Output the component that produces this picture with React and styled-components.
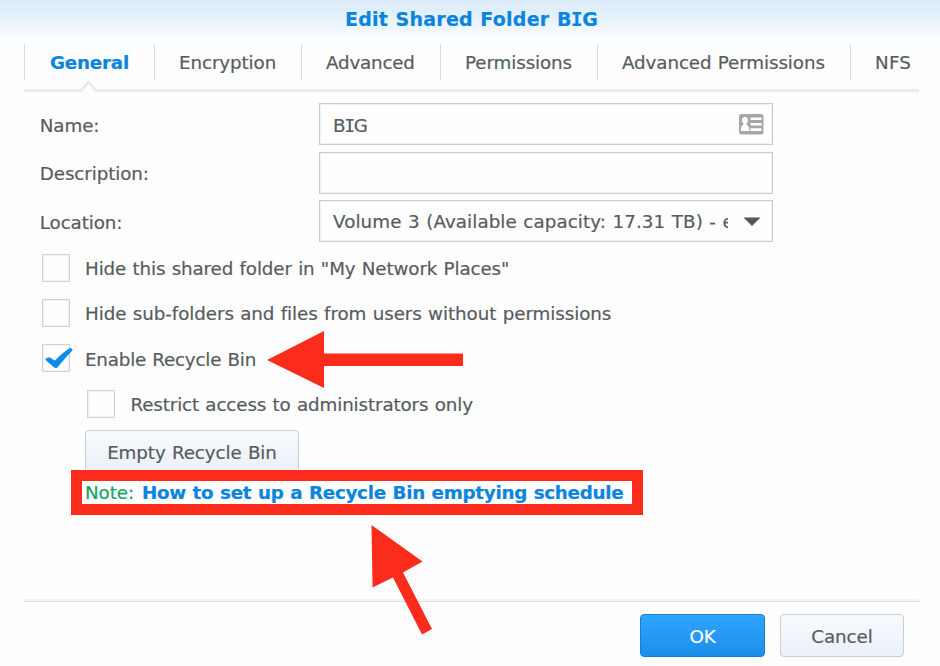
import React from "react";
import styled, { createGlobalStyle, css } from "styled-components";

const Global = createGlobalStyle`
  * { box-sizing: border-box; }
  body { margin: 0; background: #fff; overflow: hidden; }
`;

const Dialog = styled.main`
  position: relative;
  width: 940px;
  height: 666px;
  overflow: hidden;
  display: flex;
  flex-direction: column;
  background: linear-gradient(#dcebf8 0, #e2f0fa 14px, #eff7fd 27px, #fcfeff 41px, #fefefe 52px);
  color: #575c61;
  font: 18.3px/24px "DejaVu Sans", Verdana, sans-serif;
  white-space: nowrap;
`;

const Text = styled.span`
  letter-spacing: ${(p) => p.$track ?? -0.1}px;
  word-spacing: 0.6px;
  -webkit-text-stroke: 0.2px currentColor;
`;

const Title = styled.h1`
  margin: 0;
  height: 44px;
  padding: 7px 0 0 3px;
  text-align: center;
  font-size: 19px;
  line-height: 24px;
  color: #0a85df;
`;

const SerifI = styled.span`
  font-family: "DejaVu Sans Mono", monospace;
  margin: 0 ${(p) => (p.$bold ? "-0.03em" : "-0.07em")};
`;

const Tabs = styled.nav`
  height: 48px;
  margin: 0 21px 0 24px;
  display: flex;
  align-items: flex-start;
  position: relative;
`;

const Tab = styled.div`
  flex: 0 0 ${(p) => p.$w}px;
  height: 36px;
  padding: 7px 0 0 ${(p) => (p.$active ? 25 : 24)}px;
  border-left: 1px solid #d6d9dc;
  ${(p) =>
    p.$active &&
    css`
      color: #0a85df;
      font-weight: bold;
    `}
`;

const TabLine = styled.svg`
  position: absolute;
  left: 0;
  top: 34px;
`;

const Form = styled.section`
  padding: 11px 0 0 39px;
  display: flex;
  flex-direction: column;
`;

const Field = styled.div`
  display: grid;
  grid-template-columns: 280px 454px;
  align-items: center;
  height: 42px;
  margin-bottom: 6.5px;
`;

const Label = styled.label`
  padding: 3px 0 0 0.8px;
`;

const Box = styled.div`
  height: 42px;
  padding: 4px 8px 0 13px;
  border: 1px solid #c9cdd1;
  box-shadow: inset 0 0 0 1px #eff1f3;
  display: flex;
  align-items: center;
  justify-content: space-between;
  svg { flex: none; margin-top: -2px; }
`;

const SelectValue = styled.div`
  width: 395px;
  overflow: hidden;
  margin-top: -2px;
`;

const Options = styled.div`
  padding-top: 5px;
`;

const Option = styled.div`
  display: flex;
  align-items: center;
  gap: 15px;
  height: 28px;
  margin: 0 0 17.4px ${(p) => (p.$nested ? 48.4 : 3)}px;
`;

const OptionLabel = styled.label`
  padding-top: 3px;
`;

const Check = styled.span`
  width: 28px;
  height: 28px;
  flex: none;
  border: 1px solid #cfd2d6;
  box-shadow: inset 0 0 0 1px #eff1f3;
  svg { display: block; margin: 2px 0 0 2px; overflow: visible; }
`;

const Button = styled.button`
  width: ${(p) => p.$w}px;
  height: 43px;
  padding: 2px 0 0;
  border: 1px solid ${(p) => (p.$primary ? "#1580d2" : "#c8ced6")};
  border-radius: 4px;
  background: ${(p) =>
    p.$primary ? "linear-gradient(#2fa4ff, #1b8fe9)" : "linear-gradient(#f8fbfe, #eaf0f8)"};
  color: ${(p) => (p.$primary ? "#fff" : "#575c61")};
  font: inherit;
`;

const EmptyButton = styled(Button)`
  margin: -5px 0 0 46px;
`;

const Note = styled.p`
  width: 572px;
  height: 45px;
  margin: -3px 0 0 32px;
  position: relative;
  border: 11px solid #fc2c1c;
  background: #fff;
  padding-left: 3px;
  line-height: 24px;
  color: #12a366;
  b { color: #0a85df; margin-left: 8px; }
`;

const Footer = styled.footer`
  margin: auto 21px 0 24px;
  height: 65px;
  padding: 12px 15px 0 0;
  border-top: 1px solid #dcdedf;
  box-shadow: 0 -2px 0 #f4f4f5;
  display: flex;
  justify-content: flex-end;
  gap: 15px;
`;

const Annotations = styled.svg`
  position: absolute;
  inset: 0;
  pointer-events: none;
`;

const TABS = [
  { name: "General", w: 130, active: true, track: -0.2 },
  { name: "Encryption", w: 147 },
  { name: "Advanced", w: 139, track: -0.2 },
  { name: "Permissions", w: 157 },
  { name: "Advanced Permissions", w: 253 },
  { name: "NFS", w: 69, track: 0.2 },
];

const OPTIONS = [
  { label: 'Hide this shared folder in "My Network Places"', track: -0.12 },
  { label: "Hide sub-folders and files from users without permissions", track: -0.07 },
  { label: "Enable Recycle Bin", on: true, track: -0.2 },
  { label: "Restrict access to administrators only", nested: true, track: -0.12 },
];

const ContactIcon = () => (
  <svg width="26" height="22" viewBox="0 0 26 22">
    <rect x="1" y="0" width="24.500" height="20.500" rx="3" fill="#a6a6a6" />
    <path
      d="M7 3c-2 0-3 1.300-3 3.200 0 1.500.7 2.700 1.700 3.300-.2 1.800-2.900 2.500-2.900 5.600V17h8.500v-1.900c0-3.100-2.800-3.800-3-5.600 1-.6 1.700-1.800 1.700-3.300C10 4.300 9 3 7 3Z"
      fill="#fff"
    />
    <path d="M12.500 4.800H23.500M12.500 10.200H23.500M12.500 15.600H23.500" stroke="#fff" strokeWidth="2.600" />
  </svg>
);

const CheckIcon = () => (
  <svg width="30" height="26" viewBox="0 0 30 26">
    <path
      d="M1 12.500C2.500 11 4 10.500 5.500 11.500L10 14.500C15 9 20 4.500 25.500 1.500L27 3C21 9 16.500 14.500 12.500 19.500Q10.800 21.300 9 19.500Z"
      fill="#0b8ceb"
      stroke="#0b8ceb"
      strokeWidth="1.200"
      strokeLinejoin="round"
    />
  </svg>
);

export default function App() {
  return (
    <Dialog>
      <Global />
      <Title>
        <Text $track={0.24}>Edit Shared Folder B<SerifI $bold>I</SerifI>G</Text>
      </Title>
      <Tabs>
        {TABS.map((t) => (
          <Tab key={t.name} $w={t.w} $active={t.active}>
            <Text $track={t.track}>{t.name}</Text>
          </Tab>
        ))}
        <TabLine width="895" height="16">
          <path d="M0 13.500H56C60 13.500 61 8 64.500 5 68 8 69 13.500 73 13.500H895" fill="none" stroke="#efeff0" strokeWidth="2" />
          <path d="M0 12.500H55C59 12.500 61 6.500 64.500 3.500 68 6.500 70 12.500 74 12.500H895" transform="translate(0 -0.500)" fill="none" stroke="#d7d9db" />
        </TabLine>
      </Tabs>
      <Form>
        <Field>
          <Label><Text>Name:</Text></Label>
          <Box>
            <Text>B<SerifI>I</SerifI>G</Text>
            <ContactIcon />
          </Box>
        </Field>
        <Field>
          <Label><Text>Description:</Text></Label>
          <Box />
        </Field>
        <Field>
          <Label><Text>Location:</Text></Label>
          <Box>
            <SelectValue>
              <Text $track={0.08}>Volume 3 (Available capacity: 17.31 TB) - e</Text>
            </SelectValue>
            <svg width="24" height="12" viewBox="0 0 24 12">
              <path d="M3.500 1.500H20.500L12 10Z" fill="#50565b" />
            </svg>
          </Box>
        </Field>
        <Options>
          {OPTIONS.map((o) => (
            <Option key={o.label} $nested={o.nested}>
              <Check>{o.on && <CheckIcon />}</Check>
              <OptionLabel>
                <Text $track={o.track}>{o.label}</Text>
              </OptionLabel>
            </Option>
          ))}
        </Options>
        <EmptyButton $w={214}>
          <Text>Empty Recycle Bin</Text>
        </EmptyButton>
        <Note>
          <Text>Note:</Text>
          <b>
            <Text $track={-0.27}>How to set up a Recycle Bin emptying schedule</Text>
          </b>
        </Note>
      </Form>
      <Footer>
        <Button $primary $w={125}>
          <Text>OK</Text>
        </Button>
        <Button $w={124}>
          <Text>Cancel</Text>
        </Button>
      </Footer>
      <Annotations width="940" height="666" fill="#fc2c1c">
        <path d="M267 360 324 331V353.500H463V366H324V388Z" />
        <path d="M371.500 525 422.500 561.500 403 572.500 432 629 422 634.500 393 577.500 372.500 587.500Z" />
      </Annotations>
    </Dialog>
  );
}
